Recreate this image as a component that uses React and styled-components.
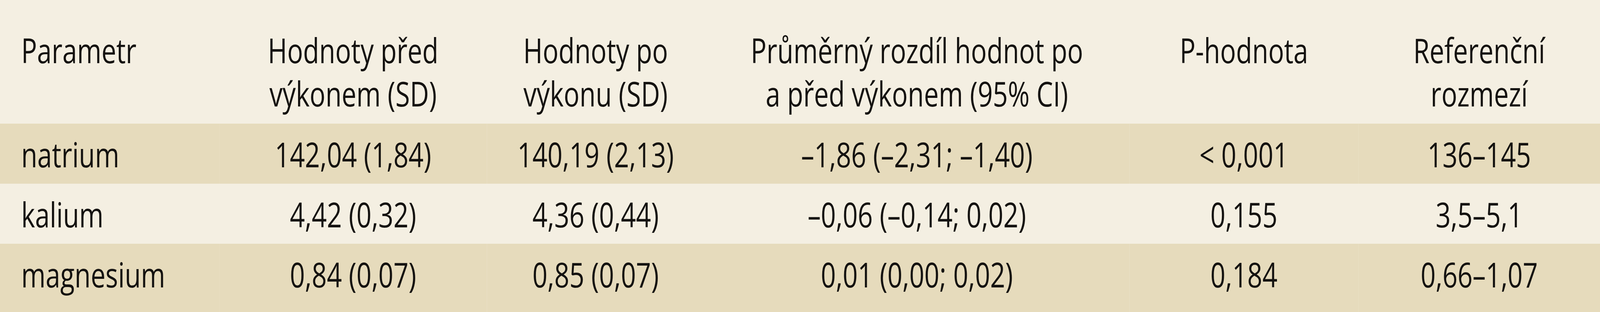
import React, { useEffect, useState } from "react";
import styled, { createGlobalStyle } from "styled-components";

const DESIGN_WIDTH = 5284;

const GlobalStyle = createGlobalStyle`
  html, body {
    margin: 0;
    padding: 0;
    background: #f4efe2;
    overflow: hidden;
  }
`;

/* The table is laid out at its design width and fitted to the window width. */
const Stage = styled.div`
  width: ${DESIGN_WIDTH}px;
  transform-origin: 0 0;
`;

const Table = styled.table`
  width: 100%;
  border-collapse: collapse;
  table-layout: fixed;
  font-family: "Open Sans", "Noto Sans", sans-serif;
  font-size: 87px;
  line-height: 111px;
  color: #141210;
`;

const Col = styled.col`
  width: ${(p) => p.$w}px;
`;

const HeadRow = styled.tr`
  background: #f4efe2;
`;

const HeadCell = styled.th`
  font-weight: 400;
  vertical-align: top;
  padding: 73px 0 22px ${(p) => (p.$left ? "70px" : "0")};
  text-align: ${(p) => (p.$left ? "left" : "center")};
  white-space: nowrap;
`;

const Row = styled.tr`
  background: ${(p) => (p.$shade ? "#e6dbbc" : "#f4efe2")};
  &:last-child td {
    padding-bottom: 42px;
  }
`;

const Cell = styled.td`
  padding: 23px 0 20px ${(p) => (p.$left ? "70px" : "0")};
  text-align: ${(p) => (p.$left ? "left" : "center")};
  white-space: nowrap;
  vertical-align: top;
`;

const widths = [724, 884, 718, 1404, 756, 798];

const headers = [
  ["Parametr"],
  ["Hodnoty před", "výkonem (SD)"],
  ["Hodnoty po", "výkonu (SD)"],
  ["Průměrný rozdíl hodnot po", "a před výkonem (95% CI)"],
  ["P-hodnota"],
  ["Referenční", "rozmezí"],
];

const rows = [
  ["natrium", "142,04 (1,84)", "140,19 (2,13)", "–1,86 (–2,31; –1,40)", "< 0,001", "136–145"],
  ["kalium", "4,42 (0,32)", "4,36 (0,44)", "–0,06 (–0,14; 0,02)", "0,155", "3,5–5,1"],
  ["magnesium", "0,84 (0,07)", "0,85 (0,07)", "0,01 (0,00; 0,02)", "0,184", "0,66–1,07"],
];

const fit = () =>
  typeof window === "undefined" ? 1 : Math.min(1, window.innerWidth / DESIGN_WIDTH);

export default function App() {
  const [scale, setScale] = useState(fit);

  useEffect(() => {
    const onResize = () => setScale(fit());
    window.addEventListener("resize", onResize);
    return () => window.removeEventListener("resize", onResize);
  }, []);

  return (
    <>
      <GlobalStyle />
      <Stage style={{ transform: `scaleX(${scale})` }}>
        <Table>
          <colgroup>
            {widths.map((w, i) => (
              <Col key={i} $w={w} />
            ))}
          </colgroup>
          <thead>
            <HeadRow>
              {headers.map((lines, i) => (
                <HeadCell key={i} $left={i === 0}>
                  {lines.map((l, j) => (
                    <React.Fragment key={j}>
                      {j > 0 && <br />}
                      {l}
                    </React.Fragment>
                  ))}
                </HeadCell>
              ))}
            </HeadRow>
          </thead>
          <tbody>
            {rows.map((r, i) => (
              <Row key={i} $shade={i % 2 === 0}>
                {r.map((c, j) => (
                  <Cell key={j} $left={j === 0}>
                    {c}
                  </Cell>
                ))}
              </Row>
            ))}
          </tbody>
        </Table>
      </Stage>
    </>
  );
}
